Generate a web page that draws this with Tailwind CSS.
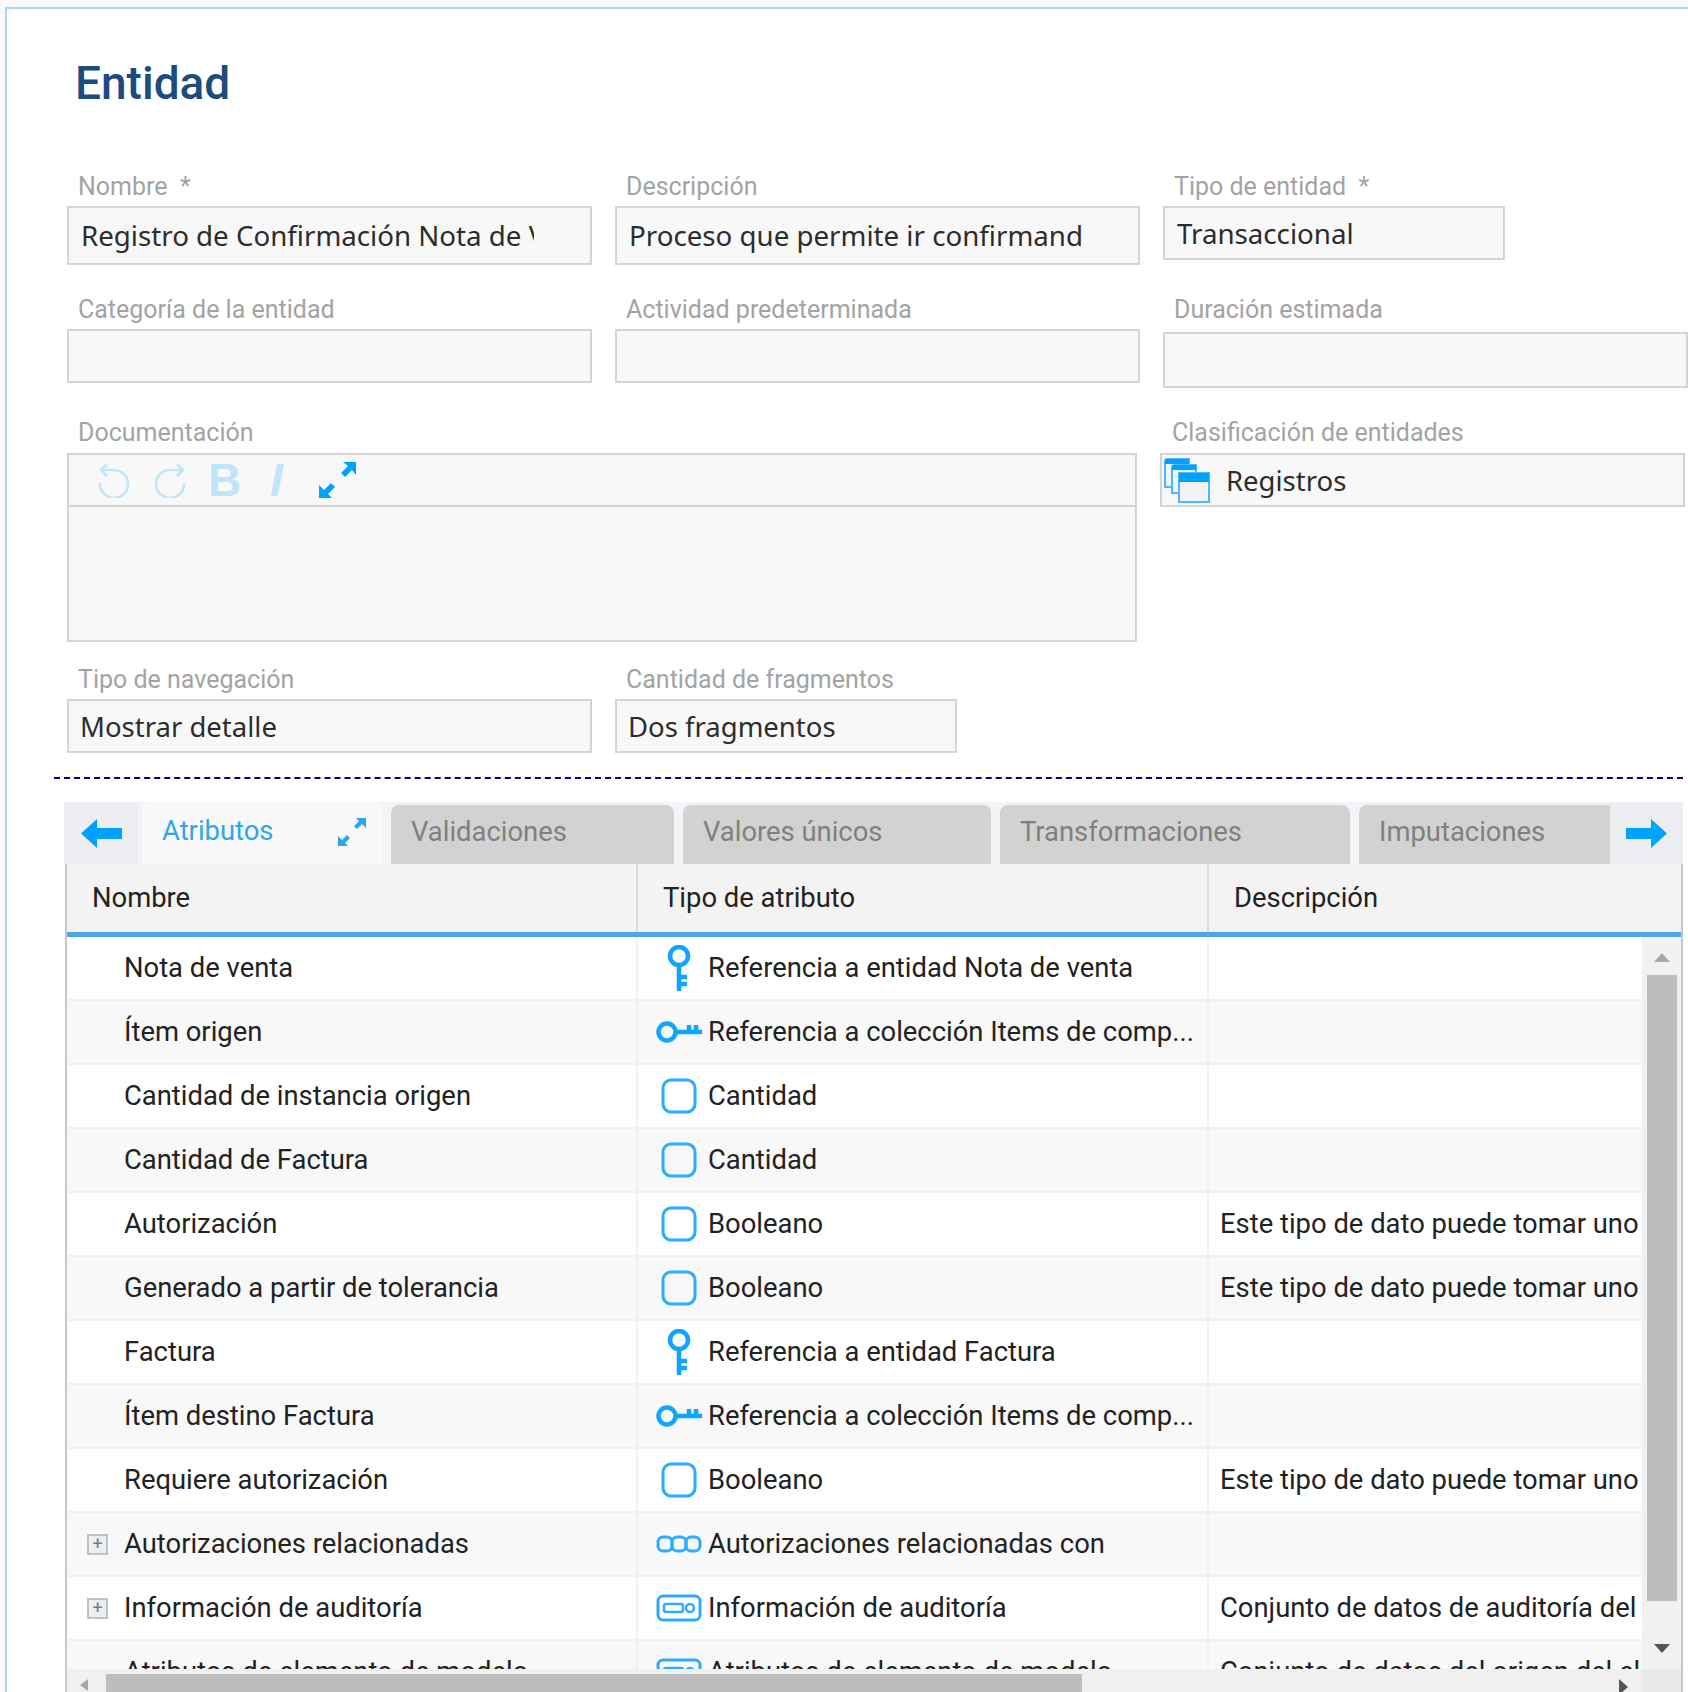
<!DOCTYPE html>
<html lang="es">
<head>
    <meta charset="UTF-8">
    <title>Entidad</title>
    <script src="https://cdn.jsdelivr.net/npm/@tailwindcss/browser@4"></script>
</head>
<body class="bg-[#f9f9f9] font-['Roboto',sans-serif]">
    <div class="w-[1688px] h-[1692px] overflow-hidden pt-[7px]">
        <div class="h-[1685px] ml-[5px] bg-white border-t-2 border-l-2 border-[#a9d5fa]">
            <h1 class="h-[163px] pl-[68px] pt-[47px] text-[46px] leading-[54px] font-medium text-[#1c4b80]">Entidad</h1>

            <!-- form -->
            <div class="pl-[60px]">
                <div class="flex gap-[23px] h-[124px]">
                    <div class="w-[525px]">
                        <div class="h-[34px] pl-[11px] text-[25px] leading-[30px] text-[#a3a3a3]">Nombre&nbsp; *</div>
                        <div class="h-[59px] border-2 border-[#d4d4d4] bg-[#f8f8f8] pl-3 pr-[56px] font-['Noto_Sans',sans-serif] text-[27.7px] leading-[55px] text-[#2c2c2c] overflow-hidden whitespace-nowrap"><div class="overflow-hidden">Registro de Confirmación Nota de Venta</div></div>
                    </div>
                    <div class="w-[525px]">
                        <div class="h-[34px] pl-[11px] text-[25px] leading-[30px] text-[#a3a3a3]">Descripción</div>
                        <div class="h-[59px] border-2 border-[#d4d4d4] bg-[#f8f8f8] pl-3 pr-[55px] font-['Noto_Sans',sans-serif] text-[27.7px] leading-[55px] text-[#2c2c2c] overflow-hidden whitespace-nowrap"><div class="overflow-hidden">Proceso que permite ir confirmando</div></div>
                    </div>
                    <div class="w-[342px]">
                        <div class="h-[34px] pl-[11px] text-[25px] leading-[30px] text-[#a3a3a3]">Tipo de entidad&nbsp; *</div>
                        <div class="h-[54px] border-2 border-[#d4d4d4] bg-[#f8f8f8] pl-3 font-['Noto_Sans',sans-serif] text-[27.7px] leading-[50px] text-[#2c2c2c]">Transaccional</div>
                    </div>
                </div>
                <div class="flex gap-[23px] h-[124px]">
                    <div class="w-[525px]">
                        <div class="h-[34px] -mt-px pl-[11px] text-[25px] leading-[30px] text-[#a3a3a3]">Categoría de la entidad</div>
                        <div class="h-[54px] border-2 border-[#d4d4d4] bg-[#f8f8f8]"></div>
                    </div>
                    <div class="w-[525px]">
                        <div class="h-[34px] -mt-px pl-[11px] text-[25px] leading-[30px] text-[#a3a3a3]">Actividad predeterminada</div>
                        <div class="h-[54px] border-2 border-[#d4d4d4] bg-[#f8f8f8]"></div>
                    </div>
                    <div class="w-[525px]">
                        <div class="h-[37px] -mt-px pl-[11px] text-[25px] leading-[30px] text-[#a3a3a3]">Duración estimada</div>
                        <div class="h-[56px] border-2 border-[#d4d4d4] bg-[#f8f8f8]"></div>
                    </div>
                </div>
                <div class="flex h-[246px]">
                    <div class="w-[1070px]">
                        <div class="h-[35px] -mt-[2px] pl-[11px] text-[25px] leading-[30px] text-[#a3a3a3]">Documentación</div>
                        <div class="h-[189px] border-2 border-[#d4d4d4] bg-[#f8f8f8]">
                            <div class="h-[52px] border-b-2 border-[#d4d4d4] flex items-center pl-[29px]">
                                <svg class="w-[33px] h-[36px]" viewBox="0 0 33 36" fill="none" stroke="#bfe5fb" stroke-width="2.5"><path d="M3 8 H17 A14 14 0 1 1 2 21"/><path d="M9 2 L3 8 L9 14"/></svg>
                                <svg class="w-[33px] h-[36px] ml-[22px]" viewBox="0 0 33 36" fill="none" stroke="#bfe5fb" stroke-width="2.5"><path d="M30 8 H16 A14 14 0 1 0 31 21"/><path d="M24 2 L30 8 L24 14"/></svg>
                                <span class="ml-[22px] w-[30px] font-['Liberation_Sans',sans-serif] font-bold text-[46px] leading-[40px] text-[#bfe5fb]">B</span>
                                <span class="ml-[32px] w-[20px] font-['Liberation_Sans',sans-serif] italic font-bold text-[46px] leading-[40px] text-[#bfe5fb]">I</span>
                                <svg class="w-[37px] h-[36px] ml-[29px]" viewBox="0 0 37 36" fill="#00a2ff"><path d="M37 0 L24 0 L29 4 L22 11 L26 15 L33 8 L37 13 Z"/><path d="M0 36 L13 36 L9 32 L16 25 L12 21 L5 28 L0 23 Z"/></svg>
                            </div>
                        </div>
                    </div>
                    <div class="w-[525px] ml-[23px]">
                        <div class="h-[35px] -mt-[2px] pl-3 text-[25px] leading-[30px] text-[#a3a3a3]">Clasificación de entidades</div>
                        <div class="h-[54px] border-2 border-[#d4d4d4] bg-[#f8f8f8] flex items-center pl-px font-['Noto_Sans',sans-serif] text-[27.5px] text-[#2c2c2c]">
                            <svg class="w-[47px] h-[46px] shrink-0" viewBox="0 0 47 46" fill="#ffffff" stroke="#4db8ff" stroke-width="2">
                                <path d="M2 18 V5 Q2 2 5 2 H26 V30 H2 Z" fill="#e9f6ff"/><path d="M2 2 H26 V7 H2 Z" fill="#00a2ff" stroke="none"/>
                                <path d="M9 24 V11 Q9 8 12 8 H33 V36 H9 Z" fill="#e9f6ff"/><path d="M9 8 H33 V13 H9 Z" fill="#00a2ff" stroke="none"/>
                                <path d="M16 16 H46 V45 H16 Z" fill="#f4f4f4"/><path d="M16 16 H46 V25 H16 Z" fill="#00a2ff" stroke="none"/>
                            </svg>
                            <span class="ml-[16px] pt-px">Registros</span>
                        </div>
                    </div>
                </div>
                <div class="flex gap-[23px]">
                    <div class="w-[525px]">
                        <div class="h-[34px] -mt-px pl-[11px] text-[25px] leading-[30px] text-[#a3a3a3]">Tipo de navegación</div>
                        <div class="h-[54px] border-2 border-[#d4d4d4] bg-[#f8f8f8] pl-[11px] font-['Noto_Sans',sans-serif] text-[27.5px] leading-[52px] text-[#2c2c2c]">Mostrar detalle</div>
                    </div>
                    <div class="w-[342px]">
                        <div class="h-[34px] -mt-px pl-[11px] text-[25px] leading-[30px] text-[#a3a3a3]">Cantidad de fragmentos</div>
                        <div class="h-[54px] border-2 border-[#d4d4d4] bg-[#f8f8f8] pl-[11px] font-['Noto_Sans',sans-serif] text-[27.5px] leading-[52px] text-[#2c2c2c]">Dos fragmentos</div>
                    </div>
                </div>
            </div>

            <div class="mt-[24px] ml-[47px] w-[1629px] border-t-2 border-dashed border-[#000080]"></div>

            <!-- tabs -->
            <div class="mt-[23px] ml-[57px] w-[1619px] h-[62px] flex items-end bg-[#f3f4f7] text-[27.4px] leading-[54px]">
                <div class="w-[74px] h-[62px] bg-[#eceef2] flex items-center justify-center shrink-0">
                    <svg class="w-[41px] h-[29px]" viewBox="0 0 41 29" fill="#00a2ff"><path d="M0 14.5 L16 0 V9 H41 V20 H16 V29 Z"/></svg>
                </div>
                <div class="w-[241px] h-[62px] ml-1 mr-2 pt-[2px] rounded-t-lg bg-[#f9f9f9] flex pl-[20px] pr-[17px] justify-between text-[#2ea6ee] shrink-0">
                    <span>Atributos</span>
                    <svg class="w-[28px] h-[28px] mt-[14px]" viewBox="0 0 28 28" fill="#2ea6ee"><path d="M28 0 L18 0 L21 3 L16 8 L19 11 L24 6 L28 10 Z"/><path d="M0 28 L10 28 L7 25 L12 20 L9 17 L4 22 L0 18 Z"/></svg>
                </div>
                <div class="w-[283px] h-[59px] mr-[9px] rounded-t-lg bg-[#d2d2d2] pl-5 text-[#808080] shrink-0">Validaciones</div>
                <div class="w-[308px] h-[59px] mr-[9px] rounded-t-lg bg-[#d2d2d2] pl-5 text-[#808080] shrink-0">Valores únicos</div>
                <div class="w-[350px] h-[59px] mr-[9px] rounded-t-lg bg-[#d2d2d2] pl-5 text-[#808080] shrink-0">Transformaciones</div>
                <div class="w-[251px] h-[59px] rounded-t-lg rounded-tr-none bg-[#d2d2d2] pl-5 text-[#808080] shrink-0">Imputaciones</div>
                <div class="w-[73px] h-[62px] bg-[#eceef2] flex items-center justify-center shrink-0">
                    <svg class="w-[41px] h-[29px]" viewBox="0 0 41 29" fill="#00a2ff"><path d="M41 14.5 L25 0 V9 H0 V20 H25 V29 Z"/></svg>
                </div>
            </div>

            <!-- table -->
            <div class="ml-[58px] w-[1618px] h-[828px] border-x-2 border-[#c8c8c8] flex flex-col text-[27.4px] text-[#222222]">
                <div class="h-[73px] shrink-0 bg-[#f3f3f3] border-b-[5px] border-[#4fa8e6] grid grid-cols-[571px_571px_1fr] leading-[68px]">
                    <div class="border-r-2 border-[#dcdcdc] pl-[25px]">Nombre</div>
                    <div class="border-r-2 border-[#dcdcdc] pl-[25px]">Tipo de atributo</div>
                    <div class="pl-[25px]">Descripción</div>
                </div>
                <div class="flex h-[732px] shrink-0">
                    <div id="rows" class="w-[1575px] h-[732px] overflow-hidden shrink-0"></div>
                    <div class="w-[39px] h-[732px] bg-[#f1f1f1] flex flex-col items-center shrink-0">
                        <div class="mt-[16px] w-0 h-0 border-x-8 border-x-transparent border-b-[9px] border-b-[#a8a8a8]"></div>
                        <div class="mt-[13px] w-[30px] h-[626px] bg-[#bdbdbd]"></div>
                        <div class="mt-[43px] w-0 h-0 border-x-8 border-x-transparent border-t-[9px] border-t-[#555555]"></div>
                    </div>
                </div>
                <div class="flex h-[23px] shrink-0">
                    <div class="w-[1575px] bg-[#f0f0f0] relative flex items-end pl-[39px]">
                        <div class="absolute left-[13px] top-[10px] w-0 h-0 border-y-[6px] border-y-transparent border-r-[8px] border-r-[#a8a8a8]"></div>
                        <div class="w-[976px] h-[18px] bg-[#bdbdbd]"></div>
                        <div class="absolute left-[1552px] top-[10px] w-0 h-0 border-y-[8px] border-y-transparent border-l-[9px] border-l-[#555555]"></div>
                    </div>
                    <div class="w-[39px] bg-[#e9e9e9]"></div>
                </div>
            </div>
        </div>
    </div>

    <script>
        const icons = {
            key: '<svg class="w-[24px] h-[46px]" viewBox="0 0 24 46" fill="none" stroke="#0ea5ff" stroke-width="4.5"><circle cx="12" cy="11" r="9"/><path d="M12 20 V46 M12 32 H20 M12 39 H20"/></svg>',
            coll: '<svg class="w-[46px] h-[24px]" viewBox="0 0 46 24" fill="none" stroke="#0ea5ff" stroke-width="4.5"><circle cx="11" cy="12" r="8.5"/><path d="M19 12 H46 M33 12 V5 M40 12 V5"/></svg>',
            box: '<svg class="w-[36px] h-[36px]" viewBox="0 0 36 36" fill="none" stroke="#2eaaff" stroke-width="3"><rect x="2" y="2" width="32" height="32" rx="8"/></svg>',
            links: '<svg class="w-[46px] h-[22px]" viewBox="0 0 46 22" fill="none" stroke="#2eaaff" stroke-width="3"><rect x="2" y="4" width="14" height="14" rx="5"/><rect x="16" y="4" width="14" height="14" rx="5"/><rect x="30" y="4" width="14" height="14" rx="5"/></svg>',
            group: '<svg class="w-[46px] h-[28px]" viewBox="0 0 46 28" fill="none" stroke="#2eaaff" stroke-width="3"><rect x="2" y="2" width="42" height="24" rx="5"/><rect x="8" y="10" width="19" height="8" rx="2" stroke-width="2.5"/><circle cx="34" cy="14" r="4" stroke-width="2.5"/></svg>'
        };

        const rows = [
            ['Nota de venta', 'key', 'Referencia a entidad Nota de venta', ''],
            ['Ítem origen', 'coll', 'Referencia a colección Items de comp...', ''],
            ['Cantidad de instancia origen', 'box', 'Cantidad', ''],
            ['Cantidad de Factura', 'box', 'Cantidad', ''],
            ['Autorización', 'box', 'Booleano', 'Este tipo de dato puede tomar uno'],
            ['Generado a partir de tolerancia', 'box', 'Booleano', 'Este tipo de dato puede tomar uno'],
            ['Factura', 'key', 'Referencia a entidad Factura', ''],
            ['Ítem destino Factura', 'coll', 'Referencia a colección Items de comp...', ''],
            ['Requiere autorización', 'box', 'Booleano', 'Este tipo de dato puede tomar uno'],
            ['Autorizaciones relacionadas', 'links', 'Autorizaciones relacionadas con', '', true],
            ['Información de auditoría', 'group', 'Información de auditoría', 'Conjunto de datos de auditoría del', true],
            ['Atributos de elemento de modelo', 'group', 'Atributos de elemento de modelo', 'Conjunto de datos del origen del elemento']
        ];

        document.getElementById('rows').innerHTML = rows.map((r, i) => `
            <div class="h-[64px] border-b-2 border-[#f0f0f0] grid grid-cols-[571px_571px_1fr] leading-[62px] ${i % 2 ? 'bg-[#f8f8f8]' : 'bg-white'}">
                <div class="border-r-2 border-[#f0f0f0] flex items-center pl-[20px]">
                    <div class="w-[37px] shrink-0">${r[4] ? '<div class="w-[21px] h-[21px] border-2 border-[#b8c4cc] bg-[#eeeeee] text-[#6f7f8a] flex items-center justify-center text-[18px] leading-none">+</div>' : ''}</div>
                    <span>${r[0]}</span>
                </div>
                <div class="border-r-2 border-[#f0f0f0] flex items-center pl-[18px]">
                    <div class="w-[46px] shrink-0 flex justify-center">${icons[r[1]]}</div>
                    <span class="ml-[6px] whitespace-nowrap">${r[2]}</span>
                </div>
                <div class="pl-[11px] pr-[2px] whitespace-nowrap overflow-hidden">${r[3]}</div>
            </div>`).join('');
    </script>
</body>
</html>
